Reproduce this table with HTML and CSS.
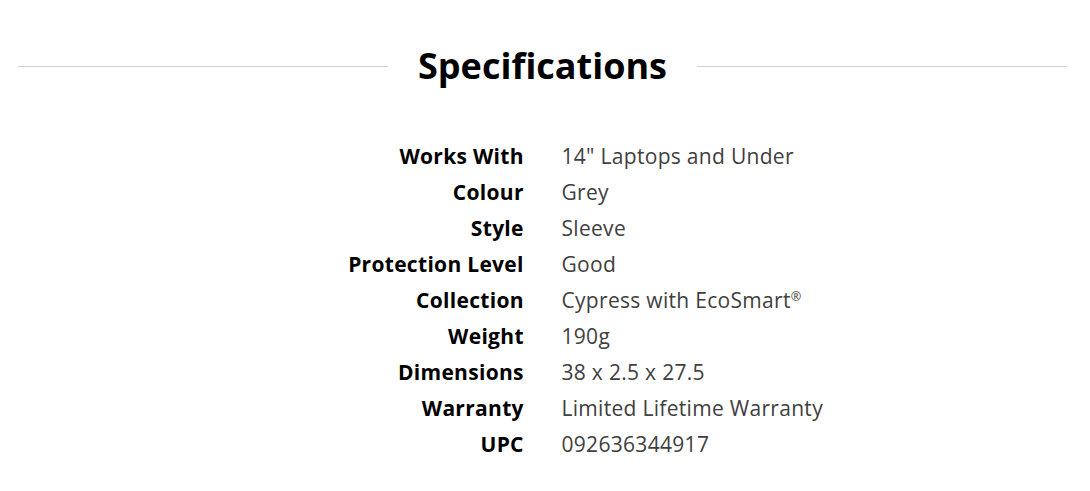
FILE: index.html
```html
<!DOCTYPE html>
<html>
<head>
<meta charset="utf-8">
<link rel="stylesheet" href="styles.css">
</head>
<body>
<section class="specs">
  <div class="specs-header">
    <span class="rule"></span>
    <h2 class="specs-title">Specifications</h2>
    <span class="rule"></span>
  </div>
  <dl class="specs-list">
    <dt>Works With</dt><dd>14" Laptops and Under</dd>
    <dt>Colour</dt><dd>Grey</dd>
    <dt>Style</dt><dd>Sleeve</dd>
    <dt>Protection Level</dt><dd>Good</dd>
    <dt>Collection</dt><dd>Cypress with EcoSmart<sup>®</sup></dd>
    <dt>Weight</dt><dd>190g</dd>
    <dt>Dimensions</dt><dd>38 x 2.5 x 27.5</dd>
    <dt>Warranty</dt><dd>Limited Lifetime Warranty</dd>
    <dt>UPC</dt><dd>092636344917</dd>
  </dl>
</section>
</body>
</html>
```
FILE: styles.css
```css
html, body {
  margin: 0;
  padding: 0;
  background: #fff;
}
body {
  font-family: "Open Sans", "Lato", sans-serif;
  color: #000;
}
.specs {
  padding: 0 23px 0 18px;
}
.specs-header {
  display: flex;
  align-items: center;
  padding-top: 42px;
}
.rule {
  flex: 1;
  height: 1px;
  background: #d2d2d2;
}
.specs-title {
  margin: 0;
  padding: 0 30px;
  font-size: 36px;
  font-weight: 700;
  line-height: 48px;
  color: #000;
}
.specs-list {
  display: grid;
  grid-template-columns: 1fr 1fr;
  column-gap: 38px;
  margin: 48px 0 0;
  font-size: 21px;
  line-height: 36px;
  letter-spacing: 0.3px;
}
.specs-list dt {
  text-align: right;
  font-weight: 700;
  color: #000;
  margin-right: -0.3px;
}
.specs-list dd {
  margin: 0;
  color: #404040;
  font-weight: 400;
}
.specs-list sup {
  font-size: 0.6em;
  line-height: 0;
  vertical-align: 0.55em;
}
```
